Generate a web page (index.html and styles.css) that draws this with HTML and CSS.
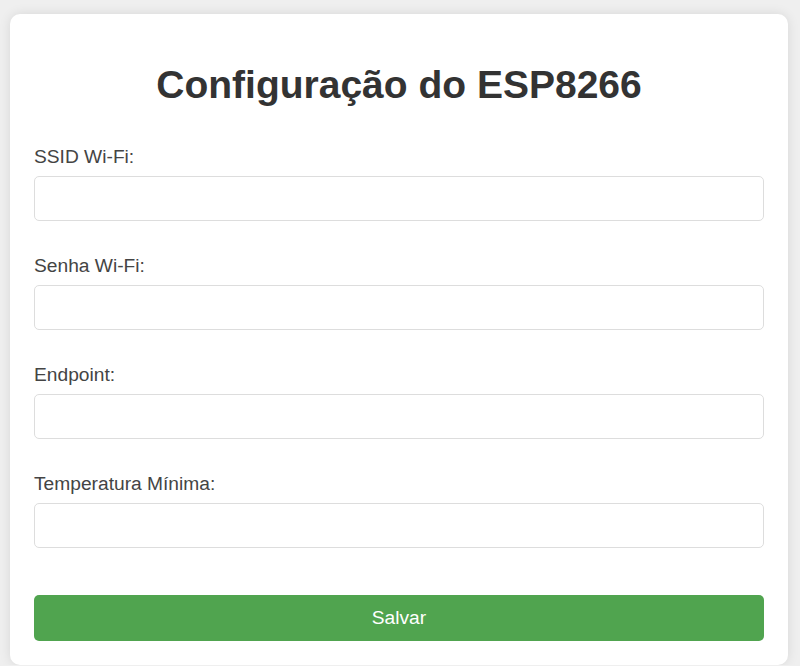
FILE: index.html
```html
<!DOCTYPE html>
<html lang="pt-BR">
<head>
<meta charset="utf-8">
<title>Configuração do ESP8266</title>
<link rel="stylesheet" href="styles.css">
</head>
<body>
  <div class="card">
    <h1 class="title">Configuração do ESP8266</h1>
    <form class="form">
      <div class="field">
        <label class="field-label" for="ssid">SSID Wi-Fi:</label>
        <input class="field-input" id="ssid" type="text">
      </div>
      <div class="field">
        <label class="field-label" for="senha">Senha Wi-Fi:</label>
        <input class="field-input" id="senha" type="password">
      </div>
      <div class="field">
        <label class="field-label" for="endpoint">Endpoint:</label>
        <input class="field-input" id="endpoint" type="text">
      </div>
      <div class="field">
        <label class="field-label" for="temp">Temperatura Mínima:</label>
        <input class="field-input" id="temp" type="text">
      </div>
      <button class="submit" type="button">Salvar</button>
    </form>
  </div>
</body>
</html>
```

FILE: styles.css
```css
html, body {
  margin: 0;
  padding: 0;
}

body {
  background: #efefef;
  font-family: "Liberation Sans", Arial, sans-serif;
  padding: 14px 12px 0 10px;
  overflow: hidden;
}

.card {
  background: #ffffff;
  border-radius: 10px;
  box-shadow: 0 0 12px rgba(0, 0, 0, 0.10);
  padding: 23px 24px 24px 24px;
  height: 604px;
}

.title {
  margin: 26px 0 39px;
  font-size: 39px;
  line-height: 44px;
  font-weight: bold;
  color: #333333;
  text-align: center;
}

.form {
  display: flex;
  flex-direction: column;
  gap: 34px;
}

.field {
  display: flex;
  flex-direction: column;
  gap: 8px;
}

.field-label {
  font-size: 19.2px;
  line-height: 22px;
  color: #444444;
}

.field-input {
  box-sizing: border-box;
  height: 45px;
  width: 100%;
  margin: 0;
  padding: 0 12px;
  border: 1.2px solid #dddddd;
  border-radius: 5px;
  background: #ffffff;
  font-family: inherit;
  font-size: 19.2px;
}

.submit {
  margin-top: 13px;
  height: 46px;
  width: 100%;
  border: none;
  border-radius: 5px;
  background: #50a44f;
  color: #ffffff;
  font-family: inherit;
  font-size: 19.2px;
}
```
